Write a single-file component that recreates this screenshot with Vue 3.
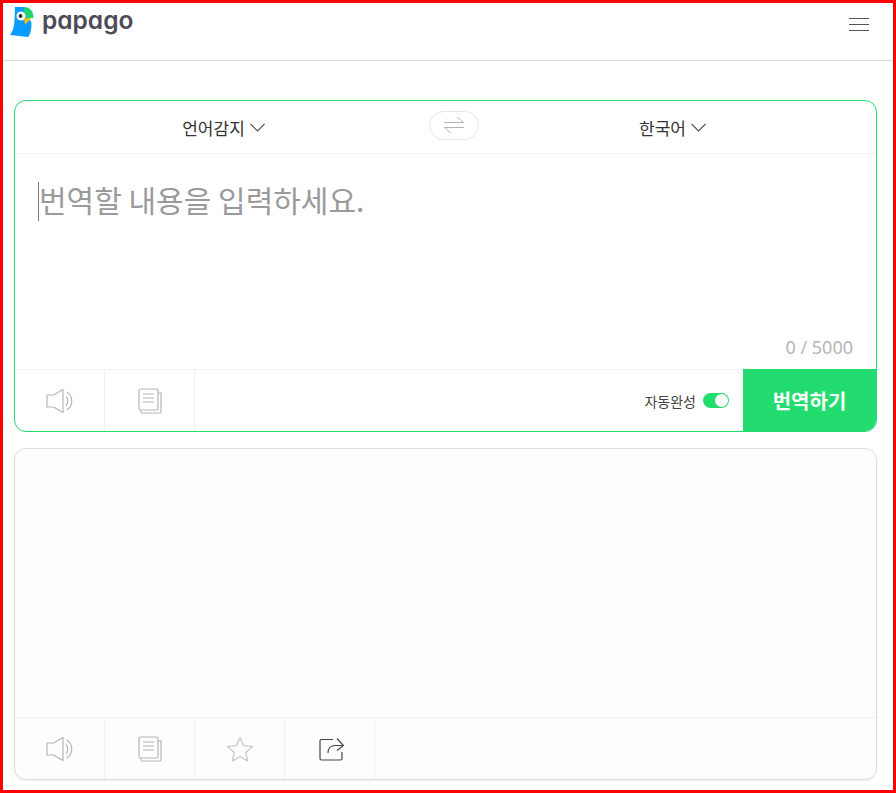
<script setup>
import { ref } from 'vue';

const sourceLang = ref('언어감지');
const targetLang = ref('한국어');
const placeholder = '번역할 내용을 입력하세요.';
</script>

<template>
  <div class="page">
    <header class="header">
      <div class="brand">
        <svg class="logo" width="25" height="32" viewBox="0 0 25 32">
          <path d="M5 1 H14 L21.500 17 C21.500 25 20 29 18 31 L0 29 C3 25 4.500 20 4.500 14 Z" fill="#0a9cff" />
          <path d="M14 1 C20 1 23.500 5 23.500 12 H14 Z" fill="#22d46f" />
          <circle cx="11" cy="10" r="4.500" fill="#fff" />
          <circle cx="10.500" cy="10" r="2" fill="#333" />
          <path d="M14 12.300 H21.500 L15 18.500 Z" fill="#fbbc14" />
        </svg>
        <span class="brand-name">papago</span>
      </div>
      <div class="menu">
        <span></span>
        <span></span>
        <span></span>
      </div>
    </header>

    <main class="content">
      <section class="card card-source">
        <div class="lang-bar">
          <button class="lang lang-source">
            {{ sourceLang }}
            <svg width="15" height="9" viewBox="0 0 15 9"><path d="M.5 1 L7.500 8 L14.500 1" fill="none" stroke="#555" stroke-width="1.100" /></svg>
          </button>
          <button class="swap">
            <svg width="22" height="18" viewBox="0 0 22 18">
              <path d="M1 6.500 H20.500 L14 1" fill="none" stroke="#b4b4b4" />
              <path d="M21 11.500 H1.500 L8 17" fill="none" stroke="#b4b4b4" />
            </svg>
          </button>
          <button class="lang lang-target">
            {{ targetLang }}
            <svg width="15" height="9" viewBox="0 0 15 9"><path d="M.5 1 L7.500 8 L14.500 1" fill="none" stroke="#555" stroke-width="1.100" /></svg>
          </button>
        </div>
        <div class="input-area">
          <div class="placeholder"><i class="caret"></i>{{ placeholder }}</div>
          <div class="count">0 / 5000</div>
        </div>
        <div class="toolbar">
          <button class="tool">
            <svg class="speaker" width="30" height="26" viewBox="0 0 30 26" fill="none" stroke="#b5b5b5" stroke-width="1.200">
              <path d="M1 7 H7.500 L17 1.500 V24.500 L7.500 19 H1 Z" stroke-linejoin="round" />
              <path d="M20 8.500 C22.500 10.500 22.500 15.500 20 17.500" />
              <path d="M20.500 4 C27.500 7.500 27.500 18.500 20.500 22" />
            </svg>
          </button>
          <button class="tool">
            <svg class="copy" width="24" height="26" viewBox="0 0 24 26" fill="none" stroke="#b5b5b5" stroke-width="1.200">
              <rect x="1" y="1" width="19" height="21" rx="1.500" />
              <path d="M20 5 H23 V23.500 A1.500 1.500 0 0 1 21.500 25 H4.500 A1.500 1.500 0 0 1 3 23.500 V22" />
              <path d="M5 6 H16 M5 10 H16 M5 14 H16" />
            </svg>
          </button>
          <div class="spacer">
            <span class="auto-label">자동완성</span>
            <span class="toggle"><i></i></span>
          </div>
          <button class="translate">번역하기</button>
        </div>
      </section>

      <section class="card card-result">
        <div class="result-area"></div>
        <div class="toolbar">
          <button class="tool">
            <svg class="speaker" width="30" height="26" viewBox="0 0 30 26" fill="none" stroke="#b5b5b5" stroke-width="1.200">
              <path d="M1 7 H7.500 L17 1.500 V24.500 L7.500 19 H1 Z" stroke-linejoin="round" />
              <path d="M20 8.500 C22.500 10.500 22.500 15.500 20 17.500" />
              <path d="M20.500 4 C27.500 7.500 27.500 18.500 20.500 22" />
            </svg>
          </button>
          <button class="tool">
            <svg class="copy" width="24" height="26" viewBox="0 0 24 26" fill="none" stroke="#b5b5b5" stroke-width="1.200">
              <rect x="1" y="1" width="19" height="21" rx="1.500" />
              <path d="M20 5 H23 V23.500 A1.500 1.500 0 0 1 21.500 25 H4.500 A1.500 1.500 0 0 1 3 23.500 V22" />
              <path d="M5 6 H16 M5 10 H16 M5 14 H16" />
            </svg>
          </button>
          <button class="tool">
            <svg class="star" width="28" height="26" viewBox="0 0 28 26" fill="none" stroke="#c4c4c4" stroke-width="1.200">
              <path d="M14 1.500 L17.600 9.600 L26.500 10.500 L19.800 16.400 L21.700 25 L14 20.600 L6.300 25 L8.200 16.400 L1.500 10.500 L10.400 9.600 Z" stroke-linejoin="round" />
            </svg>
          </button>
          <button class="tool">
            <svg class="share" width="25" height="24" viewBox="0 0 25 24" fill="none" stroke="#444" stroke-width="1.200">
              <path d="M14 2.500 H2.500 A1.500 1.500 0 0 0 1 4 V21.500 A1.500 1.500 0 0 0 2.500 23 H21.500 A1.500 1.500 0 0 0 23 21.500 V15" />
              <path d="M9 16 C9 11 12 8.500 16 8.500 H24" />
              <path d="M18 1.500 L24.500 8.500 L18 13.500" />
            </svg>
          </button>
        </div>
      </section>
    </main>
  </div>
</template>

<style>
html,
body {
  margin: 0;
  background: #fff;
}
</style>

<style scoped>
* {
  box-sizing: border-box;
}

.page {
  width: 896px;
  height: 793px;
  border: 3px solid #ff0000;
  overflow: hidden;
  background: #fff;
  font-family: "Noto Sans CJK KR", "Noto Sans", sans-serif;
}

.header {
  height: 58px;
  border-bottom: 1px solid #dcdcdc;
  display: flex;
  align-items: flex-start;
  justify-content: space-between;
  padding: 3px 24px 0 7px;
}

.brand {
  display: flex;
  align-items: center;
  height: 32px;
}

.logo {
  display: block;
}

.brand-name {
  margin-left: 7px;
  margin-top: -4px;
  font-family: Inter, sans-serif;
  font-feature-settings: "cv11" 1;
  font-size: 24.500px;
  font-weight: 600;
  line-height: 30px;
  color: #4b4b57;
}

.menu {
  width: 20px;
  margin-top: 12px;
  display: flex;
  flex-direction: column;
  gap: 5px;
}

.menu span {
  display: block;
  height: 1px;
  background: #555;
}

.content {
  padding: 39px 16px 0 11px;
  display: flex;
  flex-direction: column;
  gap: 16px;
}

.card {
  height: 332px;
  border-radius: 12px;
  display: flex;
  flex-direction: column;
  overflow: hidden;
}

.card-source {
  border: 1px solid #22dc70;
}

.card-result {
  border: 1px solid #dedede;
  background: #fdfdfd;
  box-shadow: 0 1px 2px rgba(0, 0, 0, 0.08);
}

button {
  border: 0;
  padding: 0;
  background: none;
  font-family: inherit;
}

.lang-bar {
  height: 53px;
  border-bottom: 1px solid #f0f0f0;
  display: flex;
  align-items: center;
  flex-shrink: 0;
}

.lang {
  display: flex;
  align-items: center;
  justify-content: center;
  gap: 5px;
  font-size: 17px;
  color: #333;
  height: 52px;
}

.lang-source {
  width: 417px;
}

.lang-target {
  width: 407px;
}

/* the pill overlaps both language buttons a little */
.swap {
  width: 50px;
  height: 29px;
  margin: -4px -10px 0 -3px;
  border: 1px solid #e6e6e6;
  border-radius: 15px;
  display: flex;
  align-items: center;
  justify-content: center;
  flex-shrink: 0;
}

.input-area {
  flex: 1;
  position: relative;
  padding: 22px 24px 0;
}

.placeholder {
  font-size: 30px;
  line-height: 46px;
  color: #9a9a9a;
  white-space: nowrap;
}

.caret {
  position: absolute;
  left: 23px;
  top: 28px;
  width: 1px;
  height: 39px;
  background: #777;
}

.count {
  position: absolute;
  right: 23px;
  bottom: 10px;
  font-family: "Noto Sans", sans-serif;
  font-size: 18px;
  line-height: 24px;
  color: #b5b5b5;
}

.result-area {
  flex: 1;
}

.toolbar {
  height: 62px;
  flex-shrink: 0;
  display: flex;
  border-top: 1px solid #f0f0f0;
}

.tool {
  width: 90px;
  border-right: 1px solid #f0f0f0;
  display: flex;
  align-items: center;
  justify-content: center;
}

.speaker {
  margin-left: 2px;
}

.copy {
  margin-left: 1px;
}

.share {
  margin-left: 3px;
}

.spacer {
  flex: 1;
  display: flex;
  align-items: center;
  justify-content: flex-end;
  padding-right: 14px;
  gap: 7px;
}

.auto-label {
  font-size: 14px;
  color: #444;
}

.toggle {
  width: 26px;
  height: 15px;
  border-radius: 8px;
  background: #22dc70;
  position: relative;
}

.toggle i {
  position: absolute;
  right: 1px;
  top: 1px;
  width: 13px;
  height: 13px;
  border-radius: 50%;
  background: #fff;
}

.translate {
  width: 133px;
  margin-top: -1px;
  background: #22dc70;
  color: #fff;
  font-size: 20px;
  font-weight: 700;
}
</style>
